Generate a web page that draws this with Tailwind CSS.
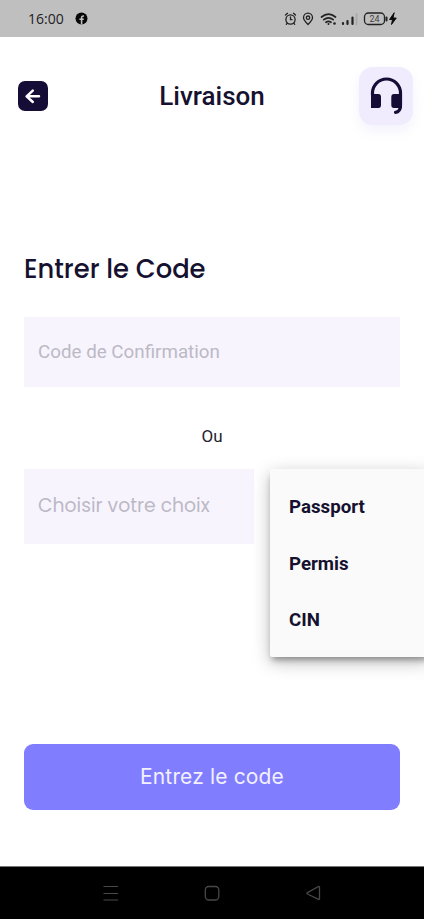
<!DOCTYPE html>
<html lang="fr">
<head>
<meta charset="utf-8">
<meta name="viewport" content="width=device-width, initial-scale=1">
<title>Livraison</title>
<script src="https://cdn.jsdelivr.net/npm/@tailwindcss/browser@4"></script>
</head>
<body class="bg-white">
<div class="relative flex h-[919px] w-[424px] flex-col overflow-hidden bg-white font-[Roboto,sans-serif] text-[#15112f]">
  <div class="flex h-[37px] shrink-0 items-center justify-between bg-[#bfbfbf] pl-7 pr-[26px] text-[#222]">
    <div class="flex items-center">
      <span class="w-[36px] whitespace-nowrap font-['Open_Sans',sans-serif] text-[14px] leading-none">16:00</span>
      <svg class="ml-[11px] size-[13px]" viewBox="0 0 13 13"><circle cx="6.5" cy="6.5" r="6" fill="#080808"/><path d="M6.6 12.5V5.8Q6.6 3.8 9 4M4.4 7.2H8.8" fill="none" stroke="#bfbfbf" stroke-width="1.6"/></svg>
    </div>
    <svg class="h-[20px] w-[114px]" viewBox="0 0 114 20" fill="none" stroke="#222" stroke-width="1.3" stroke-linecap="round">
      <circle cx="6.5" cy="10.500" r="4.6"/><path d="M1.5 6L3.5 4.3M11.500 6L9.500 4.300M6.500 8V10.700H8M3.300 14.100L2.300 15.300M9.700 14.100L10.700 15.300"/>
      <path d="M24 15.500C21.500 13 19.500 11 19.500 8.700A4.500 4.500 0 0 1 28.500 8.700C28.500 11 26.500 13 24 15.500Z"/><circle cx="24" cy="8.700" r="1.700"/>
      <path d="M37.500 8Q44.500 2.300 51.500 8M39.800 10.700Q44.500 7 49.200 10.700M42 13.300Q44.500 11.500 47 13.300" stroke-width="1.700"/>
      <circle cx="44.500" cy="15" r="1" fill="#222" stroke="none"/><circle cx="50.500" cy="14.500" r="1.300" fill="#222" stroke="none"/>
      <path d="M59 14V15M63.500 12V15M68.500 8.500V15" stroke-width="2.200"/><path d="M72.500 5V15.500" stroke="#aaa" stroke-width="1.800"/>
      <rect x="80.500" y="4" width="20" height="11.500" rx="3.800"/><path d="M102.500 8.500V11.500" stroke-width="2"/>
      <path d="M110 4L105.500 10.500H108.500L107.500 15.500L112.300 9H109.300Z" fill="#080808" stroke="#080808" stroke-width=".9"/>
      <text x="90.500" y="13" text-anchor="middle" fill="#444" stroke="none" font-family="Roboto" font-size="9">24</text>
    </svg>
  </div>

  <header class="mt-[30px] flex h-[58px] shrink-0 items-center justify-between pl-[18px] pr-[11px]">
    <button class="grid size-[30px] place-items-center rounded-[7px] bg-[#150d35]" aria-label="Retour">
      <svg class="size-[30px]" viewBox="0 0 30 30" fill="none" stroke="#fff" stroke-width="2.500" stroke-linecap="round" stroke-linejoin="round"><path d="M21 15.300H9M14.800 9.600L8.600 15.300L14.800 21"/></svg>
    </button>
    <h1 class="ml-[17px] text-[26px] font-medium leading-none">Livraison</h1>
    <button class="h-[58px] w-[54px] rounded-[14px] bg-[#f0ebfd] shadow-[0_6px_14px_#f3f2fb]" aria-label="Assistance">
      <svg class="h-[58px] w-[54px]" viewBox="0 0 54 58"><path d="M13.500 28V26A14 14 0 0 1 41.500 26V38C41.500 42.500 40 45 36.500 45.300" fill="none" stroke="#150d35" stroke-width="3.200" stroke-linecap="round"/><path d="M12 27H19.500Q22 27 22 30V38Q22 41 19.500 41H12ZM43 27H35Q32.300 27 32.300 30V38Q32.300 41 35 41H43Z" fill="#150d35"/></svg>
    </button>
  </header>

  <main class="flex flex-col px-6 pt-[129px]">
    <h2 class="h-[30px] whitespace-nowrap font-[Poppins,Inter,sans-serif] text-[25.800px] font-medium leading-[31px]">Entrer le Code</h2>
    <div class="mt-[33px] flex h-[70px] items-center bg-[#f7f4fe] px-[14px] text-[18.800px] leading-[22px] text-[#bcb9c5]">Code de Confirmation</div>
    <div class="flex h-[82px] items-center justify-center pt-[17px] text-[17px] leading-none text-[#25232e]">Ou</div>
    <div class="flex h-[75px] w-[230px] items-center whitespace-nowrap bg-[#f7f4fe] px-[14px] pb-px font-[Poppins,Inter,sans-serif] text-[18.800px] text-[#bcb9c5]">Choisir votre choix</div>
    <button class="mt-[199.500px] h-[66px] rounded-[9px] bg-[#807dff] font-[Inter,sans-serif] text-[21px] tracking-[0.150px] text-[#f3f0ff]">Entrez le code</button>
  </main>

  <ul class="absolute left-[270px] top-[469px] flex h-[188px] w-[160px] flex-col rounded-[2px] bg-[#fafafa] pt-[10px] pl-[19px] text-[18.700px] leading-[22px] font-bold shadow-[0_5px_6px_-2px_rgba(0,0,0,.32),0_5px_18px_rgba(0,0,0,.26)]">
    <li class="flex h-[56.500px] items-center">Passport</li>
    <li class="flex h-[56.500px] items-center">Permis</li>
    <li class="flex h-[56.500px] items-center">CIN</li>
  </ul>

  <nav class="mt-auto flex h-[53px] shrink-0 items-center justify-center gap-[85px] border-t border-[#777] bg-black">
    <svg class="size-4" viewBox="0 0 16 16" stroke="#484848" stroke-width="1.200"><path d="M.500 1.500H15M.500 8.500H15M.500 15H15"/></svg>
    <svg class="size-4" viewBox="0 0 16 16" fill="none" stroke="#484848" stroke-width="1.300"><rect x="1.300" y="1.500" width="13.500" height="13.500" rx="3.500"/></svg>
    <svg class="size-4" viewBox="0 0 16 16" fill="none" stroke="#484848" stroke-width="1.300" stroke-linejoin="round"><path d="M14.500 2.500V13.500Q14.500 15 13 14.200L2.500 9Q1.300 8.300 2.500 7.600L13 1.800Q14.500 1 14.500 2.500Z"/></svg>
  </nav>
</div>
</body>
</html>
